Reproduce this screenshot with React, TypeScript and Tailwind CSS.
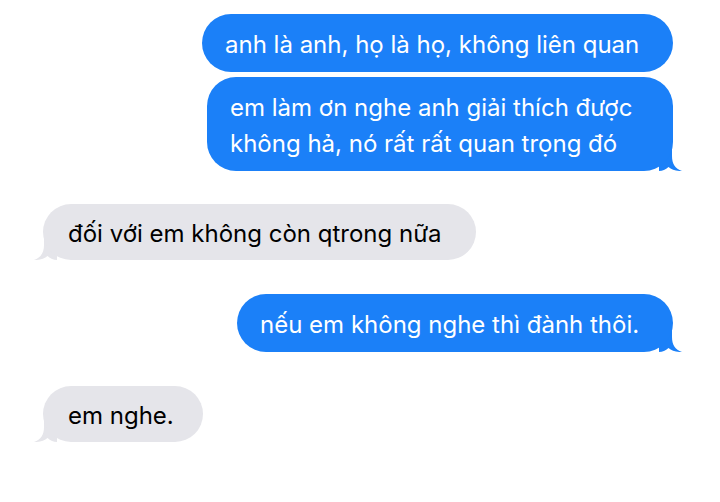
import React from "react";

function TailRight({ color }: { color: string }) {
  return (
    <svg
      className="absolute bottom-0 right-[-10px]"
      width="24"
      height="28"
      viewBox="0 0 24 28"
    >
      <path
        d="M0 0 H13 V13 C13 20.5 16 25.5 23 28 C17 28.3 12.5 26.6 9.5 24 C6.5 26.6 3.5 28 0 28 Z"
        fill={color}
      />
    </svg>
  );
}

function TailLeft({ color }: { color: string }) {
  return (
    <svg
      className="absolute bottom-0 left-[-10px]"
      width="24"
      height="28"
      viewBox="0 0 24 28"
    >
      <path
        d="M24 0 H11 V13 C11 20.5 8 25.5 1 28 C7 28.3 11.5 26.6 14.5 24 C17.5 26.6 20.5 28 24 28 Z"
        fill={color}
      />
    </svg>
  );
}

function Blue({ children, w, tail }: { children: React.ReactNode; w: string; tail?: boolean }) {
  return (
    <div className={`relative self-end ${w}`}>
      <div className="relative z-10 rounded-[29px] bg-[#1b80f8] pb-[9px] pl-[23px] pr-[20px] pt-[13px] text-white">
        {children}
      </div>
      {tail && <TailRight color="#1b80f8" />}
    </div>
  );
}

function Grey({ children, w }: { children: React.ReactNode; w: string }) {
  return (
    <div className={`relative self-start ${w}`}>
      <div className="relative z-10 rounded-[28px] bg-[#e5e5ea] pb-[8px] pl-[25px] pr-[20px] pt-[12px] text-black">
        {children}
      </div>
      <TailLeft color="#e5e5ea" />
    </div>
  );
}

export default function App() {
  return (
    <div
      className="flex h-[502px] w-[720px] flex-col bg-white pl-[43px] pr-[47px] pt-[14px] text-[24px] leading-[36px]"
      style={{ fontFamily: "Inter, 'Noto Sans', sans-serif" }}
    >
      <Blue w="w-[471px]">anh là anh, họ là họ, không liên quan</Blue>
      <div className="mt-[5px] flex flex-col">
        <Blue w="w-[466px]" tail>
          em làm ơn nghe anh giải thích được
          <br />
          không hả, nó rất rất quan trọng đó
        </Blue>
      </div>
      <div className="mt-[33px] flex flex-col">
        <Grey w="w-[433px]">đối với em không còn qtrong nữa</Grey>
      </div>
      <div className="mt-[34px] flex flex-col">
        <Blue w="w-[436px]" tail>nếu em không nghe thì đành thôi.</Blue>
      </div>
      <div className="mt-[34px] flex flex-col">
        <Grey w="w-[160px]">em nghe.</Grey>
      </div>
    </div>
  );
}
